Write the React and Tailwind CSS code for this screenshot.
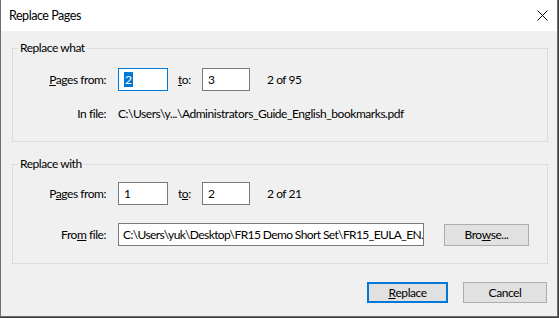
const font = { fontFamily: 'Lato, "Noto Sans", sans-serif' }

const Field = ({ value, focused, selected }) => (
  <div
    className={
      "h-[23px] flex items-center pl-[5px] bg-white " +
      (focused ? "border border-[#0078d7]" : "border border-[#7a7a7a]")
    }
  >
    {selected ? <span className="bg-[#0078d7] text-white leading-[15px] px-[1px]">{value}</span> : <span>{value}</span>}
  </div>
)

const PagesRow = ({ first, second, total, focused, altKeys }) => (
  <div className="flex items-center">
    <div className="w-[93px] text-right">
      {altKeys ? (
        <>P<u>a</u>ges from:</>
      ) : (
        <><u>P</u>ages from:</>
      )}
    </div>
    <div className="ml-[12px] w-[50px]">
      <Field value={first} focused={focused} selected={focused} />
    </div>
    <div className="ml-[10px] w-[24px]">
      {altKeys ? (
        <>t<u>o</u>:</>
      ) : (
        <><u>t</u>o:</>
      )}
    </div>
    <div className="w-[48px]">
      <Field value={second} />
    </div>
    <div className="ml-[17px]">{total}</div>
  </div>
)

export default function App() {
  return (
    <div className="w-[559px] h-[318px] bg-[#3c3c3c] text-[12px] tracking-[-0.45px] text-black leading-[16px]" style={font}>
      <div className="w-[558px] h-[317px] bg-[#f0f0f0] border-l border-r border-b border-[#6e6e6e] flex flex-col">
        <div className="h-[31px] bg-white flex items-center justify-between pl-[8px] pr-[9px] shrink-0">
          <span className="text-[12.5px]">Replace Pages</span>
          <svg width="11" height="11" viewBox="0 0 11 11">
            <path d="M0.5 0.5 L10.5 10.5 M10.5 0.5 L0.5 10.5" stroke="#000" strokeWidth="1" />
          </svg>
        </div>

        <fieldset className="ml-[11px] mt-[9px] w-[536px] border border-[#dcdcdc] pb-[19px]">
          <legend className="ml-[5px] px-[2px] leading-[16px]">Replace what</legend>
          <div className="mt-[12px]">
            <PagesRow first="2" second="3" total="2 of 95" focused />
          </div>
          <div className="flex items-center mt-[15px]">
            <div className="w-[93px] text-right">In file:</div>
            <div className="ml-[12px]">C:\Users\y...\Administrators_Guide_English_bookmarks.pdf</div>
          </div>
        </fieldset>

        <fieldset className="ml-[11px] mt-[14px] w-[536px] border border-[#dcdcdc] pb-[17px]">
          <legend className="ml-[5px] px-[2px] leading-[16px]">Replace with</legend>
          <div className="mt-[10px]">
            <PagesRow first="1" second="2" total="2 of 21" altKeys />
          </div>
          <div className="flex items-center mt-[18px]">
            <div className="w-[93px] text-right">
              Fro<u>m</u> file:
            </div>
            <div className="ml-[12px] w-[306px] h-[23px] bg-white border border-[#7a7a7a] flex items-center pl-[4px] whitespace-nowrap overflow-hidden">
              <span className="tracking-[-0.6px]">C:\Users\yuk\Desktop\FR15 Demo Short Set\FR15_EULA_EN.</span>
              <span className="ml-[1px] w-px h-[14px] bg-black shrink-0" />
            </div>
            <button className="ml-[20px] w-[85px] h-[22px] bg-[#e1e1e1] border border-[#adadad] flex items-center justify-center">
              Bro<u>w</u>se...
            </button>
          </div>
        </fieldset>

        <div className="flex justify-end mt-[18px] pr-[10px] gap-[15px]">
          <button className="w-[81px] h-[21px] bg-[#e1e1e1] border-2 border-[#0078d7] flex items-center justify-center">
            <u>R</u>eplace
          </button>
          <button className="w-[84px] h-[21px] bg-[#e1e1e1] border border-[#adadad] flex items-center justify-center">
            Cancel
          </button>
        </div>
      </div>
    </div>
  )
}
